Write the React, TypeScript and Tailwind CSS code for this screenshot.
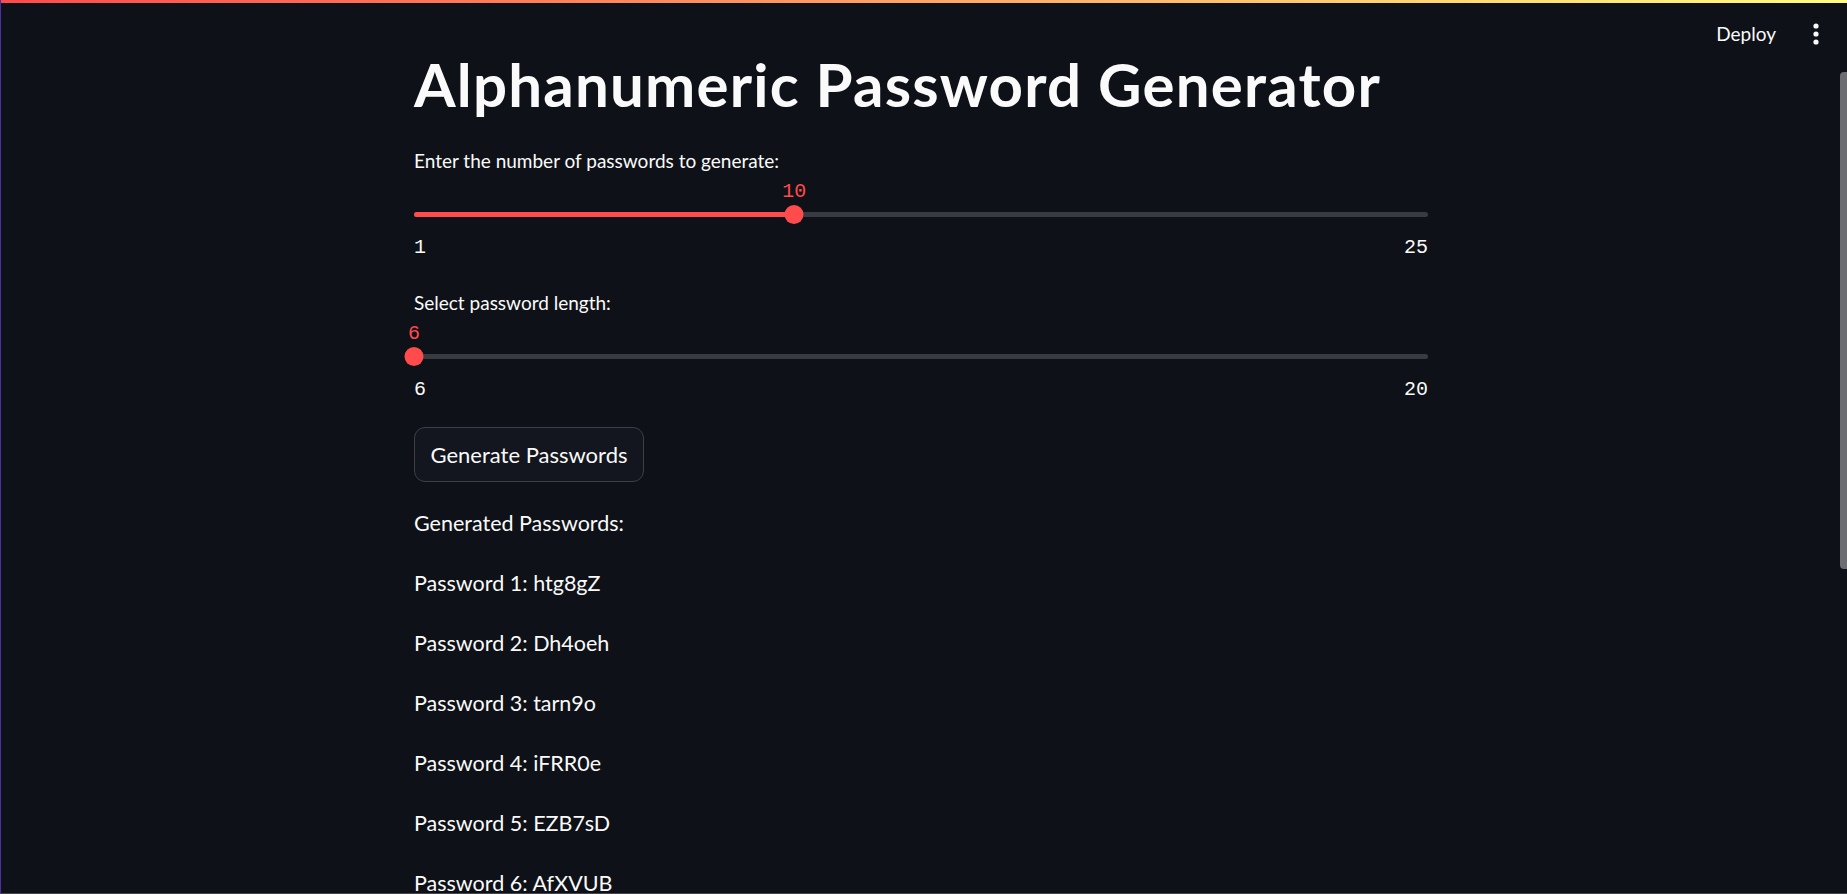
import React from 'react';

const sans = { fontFamily: 'Lato, "Noto Sans", sans-serif' };
const mono = { fontFamily: '"Liberation Mono", "DejaVu Sans Mono", monospace' };

interface SliderProps {
  label: string;
  min: number;
  max: number;
  value: number;
}

function Slider({ label, min, max, value }: SliderProps) {
  const pct = ((value - min) / (max - min)) * 100;

  return (
    <div className="flex flex-col">
      <label className="text-[19px] leading-[28px] text-[#fafafa]" style={sans}>
        {label}
      </label>
      <div className="relative mt-[7px] h-[20px]">
        <span
          className="absolute top-0 -translate-x-1/2 text-[20px] leading-[20px] text-[#ff4b4b]"
          style={{ ...mono, left: `${pct}%` }}
        >
          {value}
        </span>
      </div>
      <div className="relative flex h-[24px] items-center">
        <div className="h-[5px] w-full rounded-full bg-[#393b42]" />
        <div className="absolute left-0 h-[5px] rounded-full bg-[#ff4b4b]" style={{ width: `${pct}%` }} />
        <div
          className="absolute h-[19px] w-[19px] -translate-x-1/2 rounded-full bg-[#ff4b4b]"
          style={{ left: `${pct}%` }}
        />
      </div>
      <div className="mt-[12px] flex justify-between text-[20px] leading-[20px] text-[#fafafa]" style={mono}>
        <span>{min}</span>
        <span>{max}</span>
      </div>
    </div>
  );
}

export default function App() {
  const passwords = ['htg8gZ', 'Dh4oeh', 'tarn9o', 'iFRR0e', 'EZB7sD', 'AfXVUB', 'pQ2mXr', 'Lw9aTk', 'b3KzUe', 'Yr7hNd'];

  return (
    <div className="relative h-[894px] w-full overflow-hidden border-b border-l border-b-[#44464c] border-l-[#4a2fa8] bg-[#0e1117]" style={sans}>
      {/* header overlay */}
      <header className="absolute inset-x-0 top-0 z-10">
        <div className="h-[3px] w-full bg-[linear-gradient(90deg,#ff4b4b,#fffd80)]" />
        <div className="flex h-[62px] items-center justify-end pr-[28px]">
          <button className="mr-[37px] text-[19px] text-[#fafafa]" style={sans}>
            Deploy
          </button>
          <svg width="6" height="22" viewBox="0 0 6 22">
            <circle cx="3" cy="3" r="2.6" fill="#fafafa" />
            <circle cx="3" cy="11" r="2.6" fill="#fafafa" />
            <circle cx="3" cy="19" r="2.6" fill="#fafafa" />
          </svg>
        </div>
      </header>

      {/* scrollbar */}
      <div className="absolute right-0 top-[72px] h-[497px] w-[7px] rounded-l-[4px] bg-[#6c6d72]" />

      <main className="ml-[413px] w-[1014px] pt-[46px]">
        <h1 className="text-[60px] font-bold leading-[76px] tracking-[1.2px] text-[#fafafa]">
          Alphanumeric Password Generator
        </h1>

        <div className="mt-[25px]">
          <Slider label="Enter the number of passwords to generate:" min={1} max={25} value={10} />
        </div>

        <div className="mt-[31px]">
          <Slider label="Select password length:" min={6} max={20} value={6} />
        </div>

        <button className="mt-[27px] h-[55px] w-[230px] rounded-[11px] border border-[#3d3f45] bg-[#13161e] text-[22px] text-[#fafafa]">
          Generate Passwords
        </button>

        <div className="mt-[23px] flex flex-col gap-[23px] text-[21.5px] leading-[37px] text-[#fafafa]">
          <p>Generated Passwords:</p>
          {passwords.map((pw, i) => (
            <p key={i}>
              Password {i + 1}: {pw}
            </p>
          ))}
        </div>
      </main>
    </div>
  );
}
